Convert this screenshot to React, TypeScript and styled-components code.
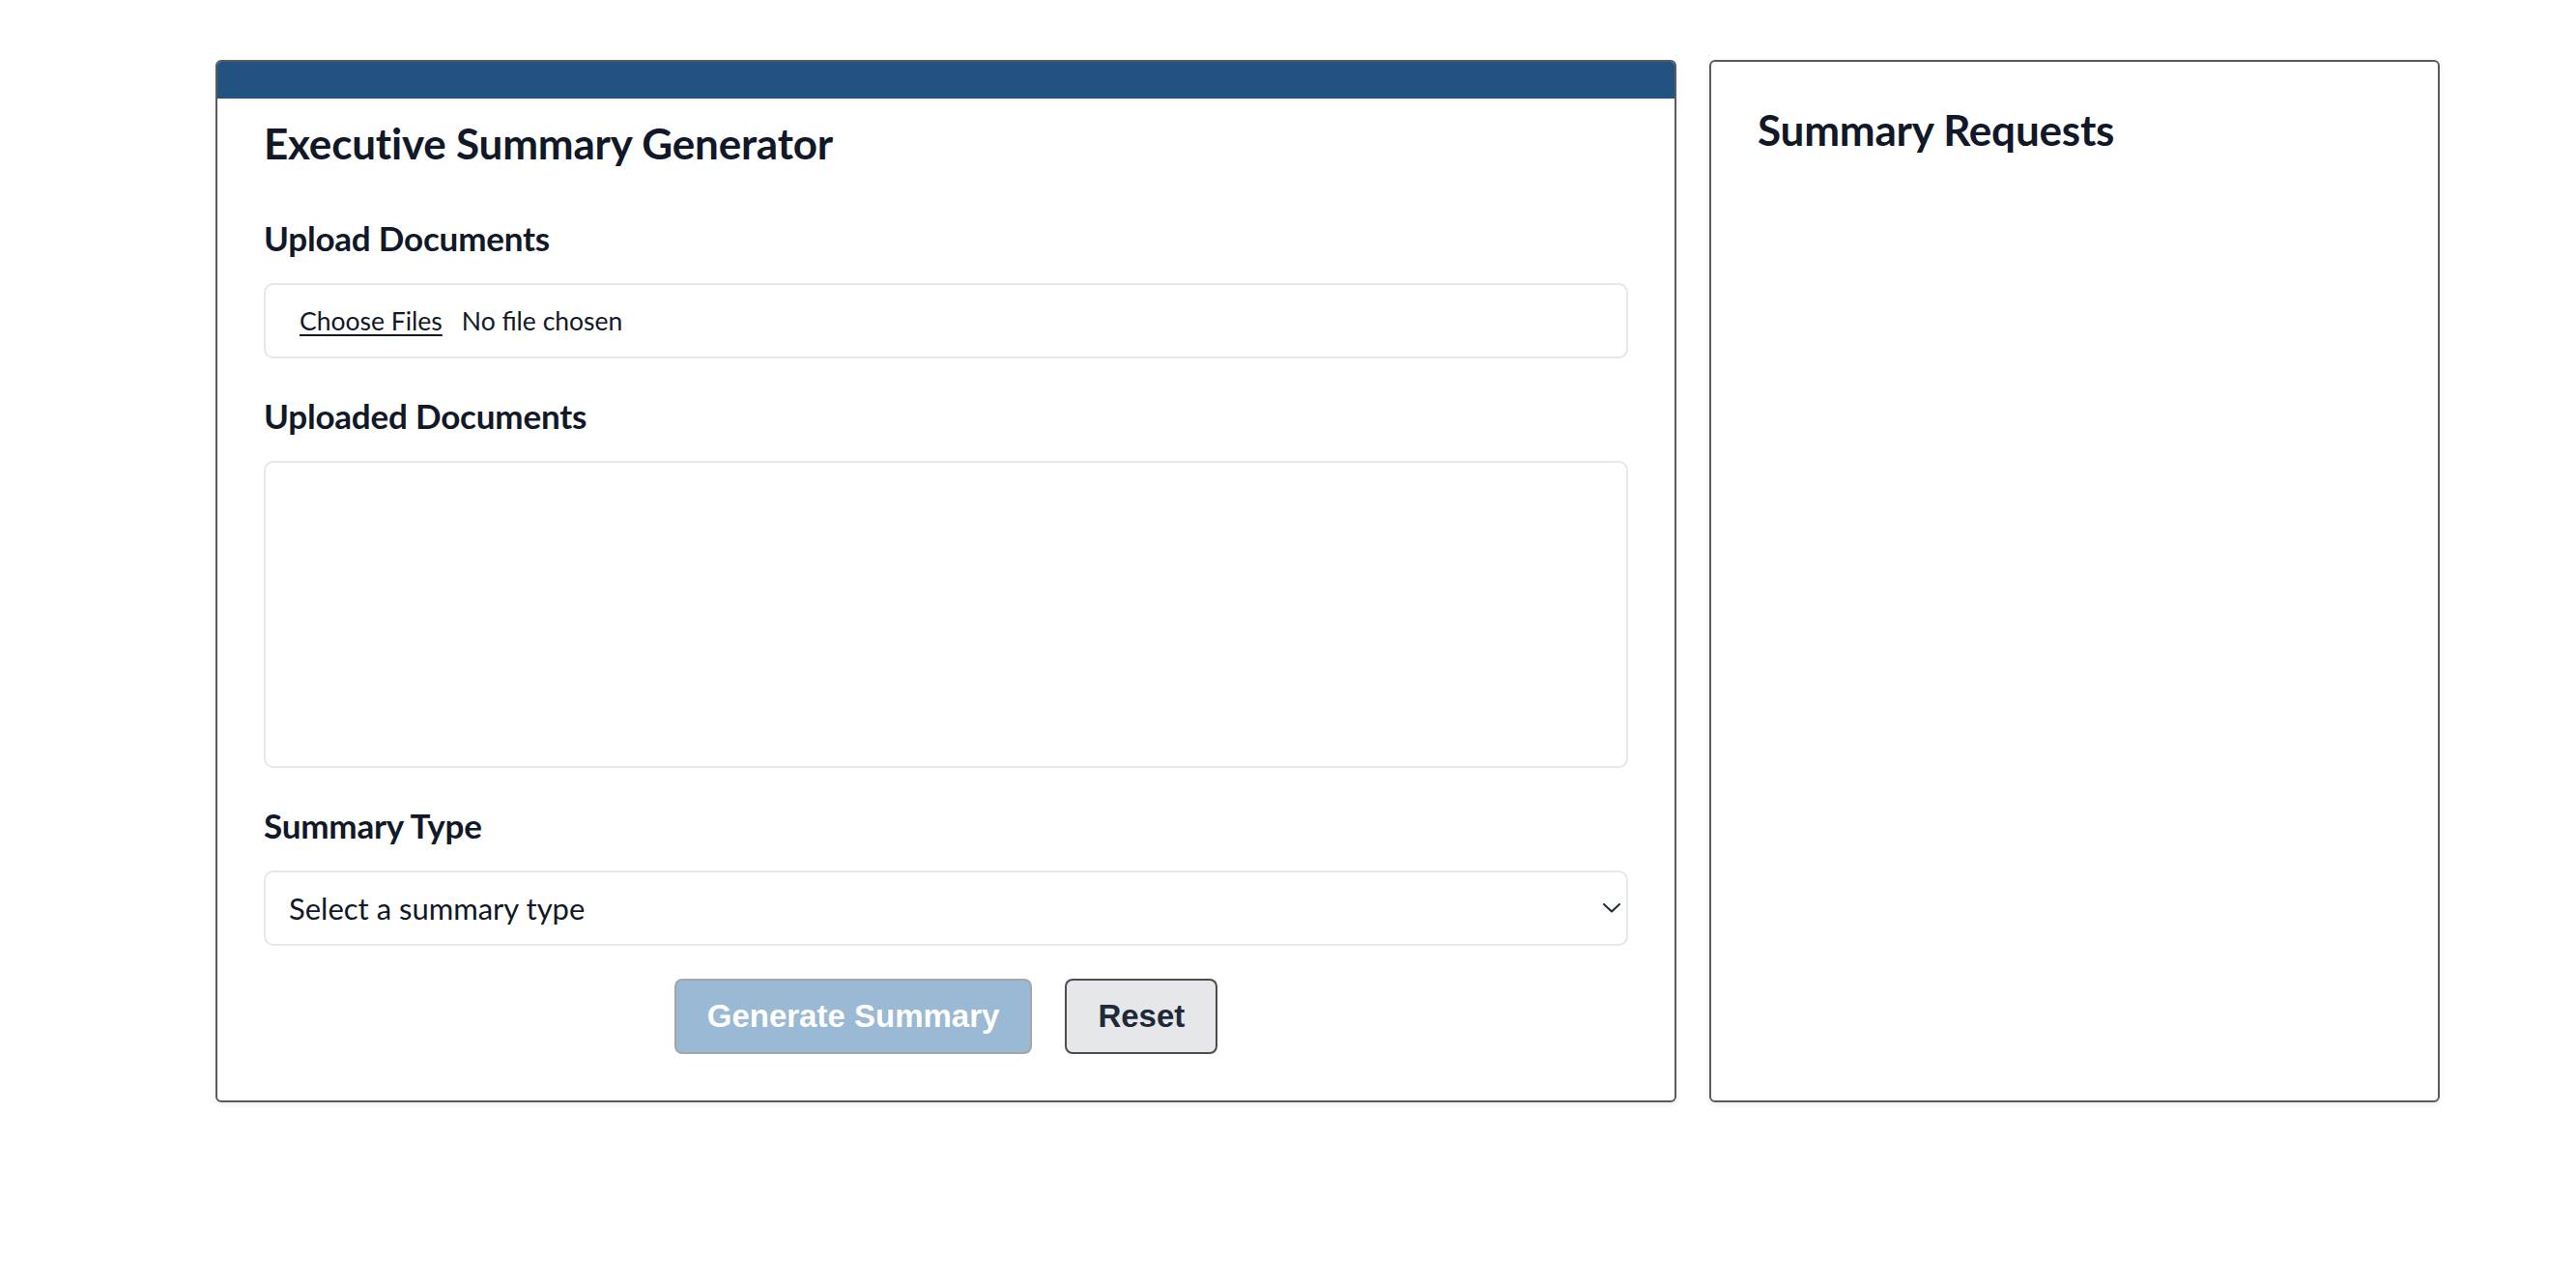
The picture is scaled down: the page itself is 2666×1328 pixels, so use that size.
import React from "react";
import styled, { createGlobalStyle } from "styled-components";

const GlobalStyle = createGlobalStyle`
  html, body {
    margin: 0;
    padding: 0;
    background: #ffffff;
  }
  body {
    font-family: "Lato", "Liberation Sans", sans-serif;
    color: #111827;
  }
  * { box-sizing: border-box; }
`;

const Page = styled.main`
  display: grid;
  grid-template-columns: 2fr 1fr;
  gap: 34px;
  align-items: stretch;
  padding: 62px 141px 40px 223px;
`;

const Card = styled.section`
  display: flex;
  flex-direction: column;
  background: #ffffff;
  border: 2px solid #5b5b5b;
  border-radius: 6px;
  overflow: hidden;
  box-shadow: 0 2px 6px rgba(0, 0, 0, 0.08);
`;

const Band = styled.div`
  height: 38px;
  background: #22527f;
  flex: none;
`;

const CardBody = styled.div<{ $top: number }>`
  display: flex;
  flex-direction: column;
  padding: ${(p) => p.$top}px 48px 48px;
`;

const Title = styled.h1<{ $gap: number }>`
  margin: 0 0 ${(p) => p.$gap}px;
  font-size: 44px;
  line-height: 53px;
  font-weight: 700;
  letter-spacing: -0.2px;
  color: #111827;
`;

const Group = styled.div`
  display: flex;
  flex-direction: column;
  & + & {
    margin-top: 38px;
  }
`;

const Label = styled.label`
  display: block;
  margin: 0 0 25px;
  font-size: 35px;
  line-height: 43px;
  font-weight: 700;
  letter-spacing: -0.2px;
  color: #111827;
`;

const FileBox = styled.div`
  display: flex;
  align-items: center;
  height: 78px;
  padding: 0 0 0 35px;
  border: 2px solid #e5e7eb;
  border-radius: 10px;
  background: #ffffff;
`;

const FileInput = styled.input`
  font-family: "Lato", "Liberation Sans", sans-serif;
  font-size: 26.5px;
  color: #111827;
  background: transparent;
  border: none;
  padding: 0;

  &::file-selector-button {
    font: inherit;
    color: #111827;
    background: none;
    border: none;
    padding: 0;
    margin: 0 20px 0 0;
    text-decoration: underline;
    text-decoration-thickness: 2px;
    text-underline-offset: 4px;
    cursor: pointer;
  }
`;

const DocList = styled.div`
  height: 318px;
  border: 2px solid #e5e7eb;
  border-radius: 10px;
  background: #ffffff;
`;

const SelectWrap = styled.div`
  position: relative;
`;

const Select = styled.select`
  appearance: none;
  -webkit-appearance: none;
  width: 100%;
  height: 78px;
  padding: 0 48px 0 24px;
  border: 2px solid #e5e7eb;
  border-radius: 10px;
  background: #ffffff;
  font-family: "Lato", "Liberation Sans", sans-serif;
  font-size: 31px;
  color: #111827;
  outline: none;
`;

const Chevron = styled.svg`
  position: absolute;
  right: 8px;
  top: 50%;
  transform: translateY(-50%);
  pointer-events: none;
`;

const ButtonRow = styled.div`
  display: flex;
  justify-content: center;
  gap: 34px;
  margin-top: 34px;
`;

const Button = styled.button<{ $variant: "primary" | "secondary" }>`
  font-family: "Liberation Sans", Arial, sans-serif;
  font-size: 33px;
  line-height: 38px;
  font-weight: 700;
  padding: 18px 32px;
  border-radius: 8px;
  border: 2px solid ${(p) => (p.$variant === "primary" ? "#a6a6a6" : "#4d4d4d")};
  background: ${(p) => (p.$variant === "primary" ? "#99b9d5" : "#e5e7eb")};
  color: ${(p) => (p.$variant === "primary" ? "#ffffff" : "#1f2937")};
  cursor: ${(p) => (p.$variant === "primary" ? "not-allowed" : "pointer")};
`;

export default function App() {
  return (
    <>
      <GlobalStyle />
      <Page>
        <Card>
          <Band />
          <CardBody $top={20}>
            <Title $gap={50}>Executive Summary Generator</Title>
            <Group>
              <Label htmlFor="docs">Upload Documents</Label>
              <FileBox>
                <FileInput id="docs" type="file" multiple />
              </FileBox>
            </Group>
            <Group>
              <Label as="div">Uploaded Documents</Label>
              <DocList />
            </Group>
            <Group>
              <Label htmlFor="stype">Summary Type</Label>
              <SelectWrap>
                <Select id="stype" defaultValue="">
                  <option value="">Select a summary type</option>
                  <option value="brief">Brief</option>
                  <option value="detailed">Detailed</option>
                </Select>
                <Chevron width="18" height="10" viewBox="0 0 18 10" fill="none">
                  <polyline
                    points="1,1 9,8.5 17,1"
                    stroke="#1f2937"
                    strokeWidth="2"
                    strokeLinecap="round"
                    strokeLinejoin="round"
                  />
                </Chevron>
              </SelectWrap>
            </Group>
            <ButtonRow>
              <Button $variant="primary" disabled>
                Generate Summary
              </Button>
              <Button $variant="secondary">Reset</Button>
            </ButtonRow>
          </CardBody>
        </Card>
        <Card>
          <CardBody $top={44}>
            <Title $gap={0}>Summary Requests</Title>
          </CardBody>
        </Card>
      </Page>
    </>
  );
}
